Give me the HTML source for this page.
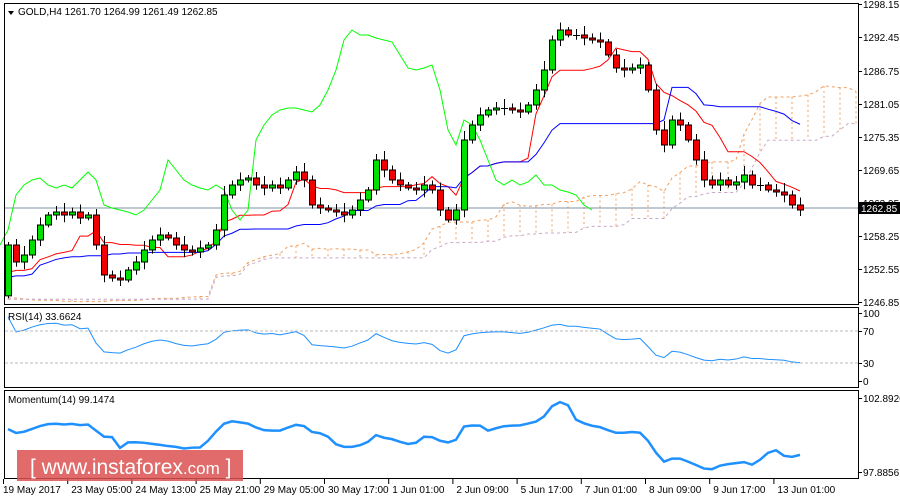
<!DOCTYPE html>
<html><head><meta charset="utf-8"><style>
body{margin:0;background:#fff;width:900px;height:500px;overflow:hidden;font-family:"Liberation Sans",sans-serif}
svg{display:block}
text{font-family:"Liberation Sans",sans-serif;font-size:10px;fill:#000}
</style></head><body>
<svg id="s" width="900" height="500" xmlns="http://www.w3.org/2000/svg">
<rect width="900" height="500" fill="#fff"/>
<g id="cloud"></g>
<line x1="5" y1="208" x2="858" y2="208" stroke="#8092a4" stroke-width="1"/>
<g id="lines"></g>
<g id="candles"></g>
<g id="ind"></g>
<rect x="4.5" y="3.5" width="854" height="301" fill="none" stroke="#000"/>
<rect x="4.5" y="307.5" width="854" height="80" fill="none" stroke="#000"/>
<rect x="4.5" y="390.5" width="854" height="88" fill="none" stroke="#000"/>
<line x1="5" y1="331" x2="858" y2="331" stroke="#bbb" stroke-dasharray="3,2"/>
<line x1="5" y1="363" x2="858" y2="363" stroke="#bbb" stroke-dasharray="3,2"/>
<polygon points="8,11 14,11 11,15" fill="#000"/>
<text x="18" y="15">GOLD,H4  1261.70 1264.99 1261.49 1262.85</text>
<text x="8" y="320">RSI(14) 33.6624</text>
<text x="8" y="403">Momentum(14) 99.1474</text>
<g id="axis"></g>
<rect x="859" y="202" width="41" height="12" fill="#000"/>
<text x="861" y="212" style="fill:#fff">1262.85</text>
<rect x="17" y="450" width="226" height="31" fill="#dc5050" opacity="0.85"/>
<text x="30" y="474" style="fill:#fff;font-size:21px">[ www.instaforex<tspan style="font-size:17px">.com</tspan> ]</text>
</svg>
<script>
var NS="http://www.w3.org/2000/svg";
function el(p,t,a){var e=document.createElementNS(NS,t);for(var k in a)e.setAttribute(k,a[k]);p.appendChild(e);return e;}
var cy=[245,262,255,240,225,215,212,215,212,218,215,245,275,278,280,270,262,250,240,235,238,245,250,252,248,245,230,195,185,180,178,185,188,185,188,180,172,180,205,208,210,212,215,210,200,190,160,170,180,185,188,190,185,190,210,220,210,140,125,115,110,108,108,110,112,105,90,70,40,30,35,35,38,40,42,55,68,70,68,65,90,130,145,120,125,140,160,180,185,180,185,182,175,185,185,190,192,195,205,210];
var pre=[];for(var i=0;i<60;i++)pre.push(300+6*Math.sin(i/5));
var all=pre.concat(cy),N=pre.length;
var H=[],L=[],O=[];
for(var i=0;i<all.length;i++){var o=i?all[i-1]:all[i],c=all[i];O.push(o);var r=3+((i*7)%5)*1.5;H.push(Math.min(o,c)-r);L.push(Math.max(o,c)+r*0.8);}
function X(i){return 8+(i-N)*8;}
function mid(i,p){var h=1e9,l=-1e9;for(var j=Math.max(0,i-p+1);j<=i;j++){h=Math.min(h,H[j]);l=Math.max(l,L[j]);}return (h+l)/2;}
var g=document.getElementById('candles');
for(var i=N;i<all.length;i++){var x=X(i),o=O[i],c=all[i];
el(g,'line',{x1:x+.5,y1:H[i],x2:x+.5,y2:L[i],stroke:'#000'});
var t=Math.min(o,c),b=Math.max(o,c);if(b-t<2){el(g,'line',{x1:x-3,y1:t+.5,x2:x+4,y2:t+.5,stroke:'#000'});}else el(g,'rect',{x:x-2.5,y:t,width:6,height:b-t,fill:c<o?'#00e000':'#f00000',stroke:'#000'});}
var ln=document.getElementById('lines'),tk='',kj='',ch='';
for(var i=N;i<all.length;i++){tk+=X(i)+','+mid(i,9)+' ';kj+=X(i)+','+mid(i,26)+' ';}
for(var i=N;i<all.length;i++){var j=i-26;if(j>=N-1)ch+=X(j)+','+all[i]+' ';}
el(ln,'polyline',{points:tk,fill:'none',stroke:'#f00'});
el(ln,'polyline',{points:kj,fill:'none',stroke:'#00f'});
el(ln,'polyline',{points:ch,fill:'none',stroke:'#0f0'});
var cl=document.getElementById('cloud'),A='',B='';
for(var i=N-26;i<all.length;i++){var x=X(i+26);if(x>856)break;var a=(mid(i,9)+mid(i,26))/2,b=mid(i,52);A+=x+','+a+' ';B+=x+','+b+' ';
if((i%2)==0)el(cl,'line',{x1:x,y1:a,x2:x,y2:b,stroke:a<b?'#f0a060':'#c8a8c8','stroke-dasharray':'2,3'});}
el(cl,'polyline',{points:A,fill:'none',stroke:'#f0a060','stroke-dasharray':'3,3'});
el(cl,'polyline',{points:B,fill:'none',stroke:'#c8a8c8','stroke-dasharray':'3,3'});
function P(y){return 1298.15-(y-4)/5.77;}
var ind=document.getElementById('ind'),rs='',mo='',ag=0,al=0;
for(var i=1;i<all.length;i++){var d=P(all[i])-P(all[i-1]);var u=Math.max(d,0),w=Math.max(-d,0);
if(i<=14){ag+=u/14;al+=w/14;}else{ag=(ag*13+u)/14;al=(al*13+w)/14;}
if(i>=N){var r=100-100/(1+ag/(al||1e-9));rs+=X(i)+','+(381-r*0.68)+' ';
var m=P(all[i])/P(all[i-14])*100;mo+=X(i)+','+Math.max(394,Math.min(476,398+(102.89-m)*14.8))+' ';}}
el(ind,'polyline',{points:rs,fill:'none',stroke:'#1e90ff'});
el(ind,'polyline',{points:mo,fill:'none',stroke:'#1e90ff','stroke-width':2.5});
var ax=document.getElementById('axis');
[[4,'1298.15'],[37,'1292.45'],[71,'1286.75'],[104,'1281.05'],[137,'1275.35'],[170,'1269.65'],[203,'1263.95'],[236,'1258.25'],[269,'1252.55'],[302,'1246.85'],[313,'100'],[331,'70'],[363,'30'],[381,'0'],[398,'102.8926'],[472,'97.8856']].forEach(function(a){
el(ax,'line',{x1:859,y1:a[0]+.5,x2:862,y2:a[0]+.5,stroke:'#000'});var t=el(ax,'text',{x:863,y:a[0]+4});t.textContent=a[1];});
var tl=['19 May 2017','23 May 05:00','24 May 13:00','25 May 21:00','29 May 05:00','30 May 17:00','1 Jun 01:00','2 Jun 09:00','5 Jun 17:00','7 Jun 01:00','8 Jun 09:00','9 Jun 17:00','13 Jun 01:00'];
tl.forEach(function(s,k){var x=3+k*64.2;el(ax,'line',{x1:x+.5,y1:479,x2:x+.5,y2:484,stroke:'#000'});var t=el(ax,'text',{x:x+(k?4:0),y:493});t.textContent=s;});
</script>
</body></html>
